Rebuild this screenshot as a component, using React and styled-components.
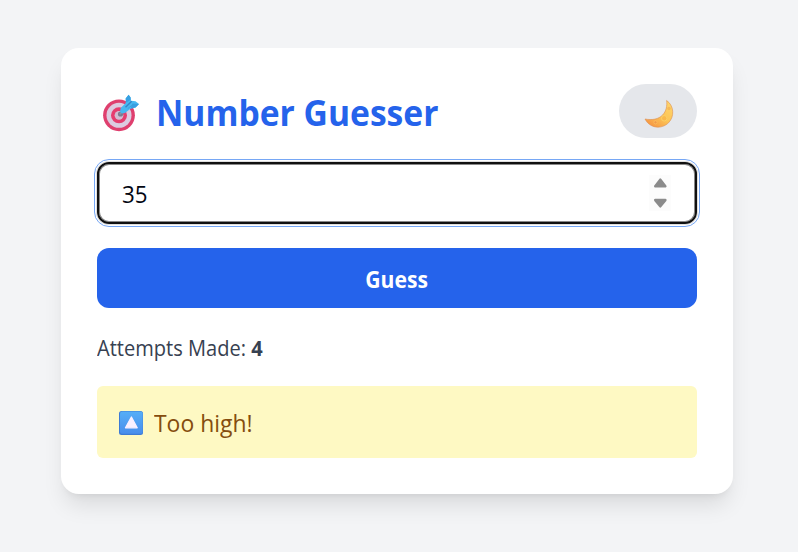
import React, { useState } from "react";
import styled, { createGlobalStyle } from "styled-components";

const GlobalStyle = createGlobalStyle`
  *, *::before, *::after { box-sizing: border-box; }
  body {
    margin: 0;
    background: #f3f4f6;
    font-family: "Open Sans", "Noto Sans", sans-serif;
  }
`;

const Page = styled.main`
  min-height: 552px;
  padding: 48px 65px 0 61px;
`;

const Card = styled.section`
  width: 672px;
  height: 446px;
  padding: 36px;
  border-radius: 18px;
  background: #fff;
  box-shadow: 0 15px 22.5px -4.5px rgba(0, 0, 0, 0.1), 0 6px 9px -6px rgba(0, 0, 0, 0.1);
  display: flex;
  flex-direction: column;
`;

const Header = styled.header`
  height: 54px;
  display: flex;
  align-items: center;
  justify-content: space-between;
`;

const Label = styled.span`
  display: inline-block;
  transform: scaleX(${(p) => p.$scale});
  transform-origin: ${(p) => p.$origin || "left"} center;
`;

const Title = styled.h1`
  margin: 0;
  padding: 3px 0 0 4px;
  display: flex;
  align-items: center;
  gap: 16px;
  color: #2563eb;
  font-size: 36px;
  line-height: 48px;
  font-weight: 700;
  white-space: nowrap;
`;

const ThemeToggle = styled.button`
  width: 78px;
  height: 54px;
  padding: 6px 0 0 1px;
  border: 0;
  border-radius: 27px;
  background: #e5e7eb;
  display: flex;
  align-items: center;
  justify-content: center;
`;

const Field = styled.label`
  height: 62px;
  margin-top: 24px;
  padding: 0 24px 0 23px;
  border: 2px solid #101010;
  border-radius: 12px;
  outline: 1px solid #76a7f5;
  outline-offset: 2px;
  box-shadow: inset 0 0 0 1px #888, 0 0 0 1px #dedede;
  display: flex;
  align-items: center;
  justify-content: space-between;
`;

const NumberInput = styled.input`
  width: 400px;
  padding: 2px 0 0;
  border: 0;
  outline: 0;
  background: transparent;
  color: #030712;
  font: 400 24px/36px "Open Sans", "Noto Sans", sans-serif;
  transform: scaleX(0.93);
  transform-origin: left center;
`;

const Spinner = styled.span`
  width: 22px;
  height: 36px;
  background: #fcfcfc;
  display: flex;
`;

const GuessButton = styled.button`
  height: 60px;
  margin-top: 24px;
  padding: 1px 1px 0 0;
  border: 0;
  border-radius: 12px;
  background: #2563eb;
  color: #fff;
  font: 700 24px/36px "Open Sans", "Noto Sans", sans-serif;
`;

const Attempts = styled.p`
  margin: 25px 0 0;
  color: #374151;
  font-size: 21px;
  line-height: 30px;
`;

const Feedback = styled.div`
  height: 72px;
  margin-top: 23px;
  padding: 0 22px;
  border-radius: 6px;
  background: #fef9c3;
  color: #854d0e;
  display: flex;
  align-items: center;
  gap: 11px;
  font-size: 24px;
`;

const TargetIcon = () => (
  <svg width="39" height="38" viewBox="0 0 39 38" aria-hidden="true">
    <circle cx="18" cy="21.3" r="15.9" fill="#df3f6e" />
    <circle cx="18" cy="21.3" r="12.5" fill="#dccbe0" />
    <circle cx="18" cy="21.3" r="8" fill="#e63d6e" />
    <circle cx="18" cy="21.3" r="4.4" fill="#d3bdd2" />
    <circle cx="19.5" cy="20" r="2.6" fill="#7c7c91" />
    <path d="M18.8 20.2 24 15" stroke="#8794a8" strokeWidth="1.6" />
    <path d="M19.7 14 24.8 9 24.6 4.5 27.6 0.8 29.6 3.5 30 6.8 34.5 7.3 38 10 34.5 13.5 29.5 14.8 24 19Q20.5 20.3 19 17.8Z" fill="#48b8f0" />
    <path d="M25.2 8.5 24.7 4.5 27.6 0.8 29.6 3.5 29.5 6ZM31.5 9.5 38 10 34.5 13.5 29.5 14.5Z" fill="#38a0e2" />
    <path d="m24.5 13.3 6.2-6" stroke="#3685c6" strokeWidth="1.4" />
    <path d="m26.8 14.6 5.4-4.3" stroke="#429bd7" strokeWidth="0.9" />
  </svg>
);

const MoonIcon = () => (
  <svg width="30" height="30" viewBox="0 0 30 30" aria-hidden="true">
    <defs>
      <linearGradient id="moon" x1="1" y1="0" x2="0.2" y2="1">
        <stop offset="0" stopColor="#ffd770" />
        <stop offset="0.55" stopColor="#fcc556" />
        <stop offset="1" stopColor="#f69442" />
      </linearGradient>
    </defs>
    <path d="M22.6 1.5C30 6.5 30.8 17.5 24.5 23.8 17 31 5.5 29 1 20 8 21.3 14.5 20.3 18.6 16 22.2 12.3 23.3 7 22.6 1.5Z" fill="url(#moon)" stroke="#dc8e51" strokeWidth="0.6" />
    <circle cx="20.2" cy="19.3" r="2.7" fill="#f9b84b" stroke="#fbd36b" strokeWidth="0.8" />
    <circle cx="25" cy="9.5" r="1.7" fill="#f6b958" />
    <circle cx="11.5" cy="23.3" r="1.6" fill="#ef974b" stroke="#ffc762" strokeWidth="0.6" />
  </svg>
);

const SpinnerIcon = () => (
  <svg width="22" height="36" viewBox="0 0 22 36" fill="#8b8b8b" stroke="#8b8b8b" strokeWidth="2.6" strokeLinejoin="round" aria-hidden="true">
    <path d="m11.3 4.7 5 6.5H6.3ZM11.3 31.3l-5-6.2h10Z" />
  </svg>
);

const UpIcon = () => (
  <svg width="24" height="24" viewBox="0 0 24 24" aria-hidden="true">
    <defs>
      <linearGradient id="up" x1="0" y1="0" x2="0" y2="1">
        <stop stopColor="#55aef7" />
        <stop offset="1" stopColor="#498eec" />
      </linearGradient>
    </defs>
    <rect width="24" height="24" rx="2.5" fill="#3d7bd5" />
    <rect x="1" y="0.6" width="22.7" height="22.2" rx="2" fill="url(#up)" />
    <path d="m12.4 6 5.8 10.8H6.5Z" fill="#faf0ff" stroke="#faf0ff" strokeWidth="1.3" strokeLinejoin="round" />
  </svg>
);

const StatusIcon = styled.span`
  display: flex;
  margin-top: 2px;
`;

export default function App() {
  const [guess, setGuess] = useState("35");
  return (
    <>
      <GlobalStyle />
      <Page>
        <Card>
          <Header>
            <Title><TargetIcon /><Label $scale={0.934}>Number Guesser</Label></Title>
            <ThemeToggle aria-label="Toggle theme"><MoonIcon /></ThemeToggle>
          </Header>
          <Field>
            <NumberInput value={guess} inputMode="numeric" aria-label="Your guess" onChange={(e) => setGuess(e.target.value)} />
            <Spinner><SpinnerIcon /></Spinner>
          </Field>
          <GuessButton><Label $scale={0.88} $origin="center">Guess</Label></GuessButton>
          <Attempts><Label $scale={0.955}>Attempts Made: <strong>4</strong></Label></Attempts>
          <Feedback role="status"><StatusIcon><UpIcon /></StatusIcon><Label $scale={0.955}>Too high!</Label></Feedback>
        </Card>
      </Page>
    </>
  );
}
